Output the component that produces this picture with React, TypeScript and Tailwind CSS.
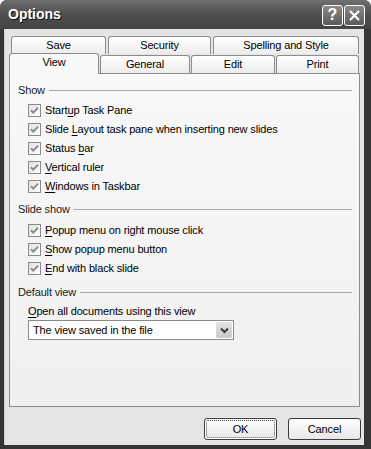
import React from "react";

const font = { fontFamily: '"Liberation Sans", Arial, sans-serif' };

const Check = () => (
  <span className="w-[13px] h-[13px] border border-[#8a8a8a] bg-gradient-to-br from-[#e2e2e2] to-white flex items-center justify-center shrink-0">
    <svg width="9" height="9" viewBox="0 0 9 9">
      <path d="M1 4.2 L3.3 6.6 L8 1.6" fill="none" stroke="#8a8a8a" strokeWidth="2" />
    </svg>
  </span>
);

const Option = ({ pre, u, post }: { pre: string; u: string; post: string }) => (
  <div className="h-[19px] flex items-center gap-[4px] pl-[18px]">
    <Check />
    <span>
      {pre}
      <span className="underline underline-offset-2">{u}</span>
      {post}
    </span>
  </div>
);

const Group = ({ title }: { title: string }) => (
  <div className="flex items-center gap-[4px] h-[16px] pl-[8px] pr-[7px]">
    <span className="text-[#222]">{title}</span>
    <div className="flex-1 h-px bg-[#a8a8a8]" />
  </div>
);

const Tab = ({ label, w }: { label: string; w: string }) => (
  <div
    className={`${w} h-[18px] border border-b-0 border-[#8c8c8c] rounded-t-[3px] bg-gradient-to-b from-white to-[#ececec] flex items-center justify-center`}
  >
    {label}
  </div>
);

export default function App() {
  return (
    <div
      className="w-[371px] h-[449px] bg-[#363636] rounded-t-[7px] flex flex-col text-[11px] text-black overflow-hidden"
      style={font}
    >
      {/* title bar */}
      <div className="h-[29px] shrink-0 flex items-center justify-between pl-[8px] pr-[6px] bg-gradient-to-b from-[#707070] via-[#4e4e4e] to-[#444]">
        <span className="text-white font-bold text-[14px] [text-shadow:1px_1px_0_#111]">Options</span>
        <div className="flex gap-[1px] mt-[1px]">
          <div className="w-[21px] h-[21px] rounded-[3px] border border-white bg-gradient-to-b from-[#8a8a8a] to-[#5a5a5a] flex items-center justify-center text-white font-bold text-[16px]">
            ?
          </div>
          <div className="w-[21px] h-[21px] rounded-[3px] border border-white bg-gradient-to-b from-[#8a8a8a] to-[#5a5a5a] flex items-center justify-center">
            <svg width="13" height="13" viewBox="0 0 13 13">
              <path d="M2 2 L11 11 M11 2 L2 11" stroke="white" strokeWidth="2.2" />
            </svg>
          </div>
        </div>
      </div>

      {/* body */}
      <div className="flex-1 ml-[4px] mr-[7px] mb-[4px] bg-[#e5e5e5] border-l border-[#cfcfcf] flex flex-col tracking-[-0.15px]">
        {/* tabs */}
        <div className="pt-[7px] pl-[6px] flex gap-[2px]">
          <Tab label="Save" w="w-[95px]" />
          <Tab label="Security" w="w-[103px]" />
          <Tab label="Spelling and Style" w="w-[146px]" />
        </div>
        <div className="pl-[4px] flex items-end h-[19px]">
          <div className="relative z-10 w-[90px] h-[21px] -mb-px border border-b-0 border-[#8c8c8c] rounded-t-[3px] bg-[#f8f8f8] flex items-center justify-center pb-[4px]">
            View
          </div>
          <div className="flex gap-[1px] ml-px">
            <Tab label="General" w="w-[90px]" />
            <Tab label="Edit" w="w-[84px]" />
            <Tab label="Print" w="w-[83px]" />
          </div>
        </div>

        {/* panel */}
        <div className="ml-[4px] mr-[4px] h-[334px] border border-[#8c8c8c] bg-gradient-to-b from-[#f8f8f8] to-[#f0f0f0] pt-[8px] flex flex-col">
          <Group title="Show" />
          <div className="mt-[3px]">
            <Option pre="Start" u="u" post="p Task Pane" />
            <Option pre="Slide " u="L" post="ayout task pane when inserting new slides" />
            <Option pre="Status " u="b" post="ar" />
            <Option pre="" u="V" post="ertical ruler" />
            <Option pre="" u="W" post="indows in Taskbar" />
          </div>
          <div className="mt-[5px]">
            <Group title="Slide show" />
          </div>
          <div className="mt-[4px]">
            <Option pre="" u="P" post="opup menu on right mouse click" />
            <Option pre="" u="S" post="how popup menu button" />
            <Option pre="" u="E" post="nd with black slide" />
          </div>
          <div className="mt-[6px]">
            <Group title="Default view" />
          </div>
          <div className="pl-[18px] mt-[4px]">
            <div className="h-[14px] flex items-center">
              <span>
                <span className="underline underline-offset-2">O</span>pen all documents using this view
              </span>
            </div>
            <div className="mt-[2px] w-[206px] h-[20px] border border-[#8a8a8a] bg-white flex items-center justify-between pl-[4px] pr-px">
              <span>The view saved in the file</span>
              <div className="w-[16px] h-[16px] rounded-[2px] bg-gradient-to-b from-[#e4e4e4] to-[#c8c8c8] flex items-center justify-center">
                <svg width="9" height="7" viewBox="0 0 9 7">
                  <path d="M1 1.5 L4.5 5 L8 1.5" fill="none" stroke="#3a3a3a" strokeWidth="2" />
                </svg>
              </div>
            </div>
          </div>
        </div>

        {/* buttons */}
        <div className="flex justify-end gap-[11px] pr-[3px] mt-[11px]">
          <div className="w-[73px] h-[22px] rounded-[3px] border border-[#3c3c3c] p-px bg-white">
            <div className="w-full h-full rounded-[2px] border border-dotted border-[#555] bg-gradient-to-b from-white to-[#e8e8e8] flex items-center justify-center">
              OK
            </div>
          </div>
          <div className="w-[73px] h-[22px] rounded-[3px] border border-[#3c3c3c] bg-gradient-to-b from-white to-[#e8e8e8] flex items-center justify-center">
            Cancel
          </div>
        </div>
      </div>
    </div>
  );
}
